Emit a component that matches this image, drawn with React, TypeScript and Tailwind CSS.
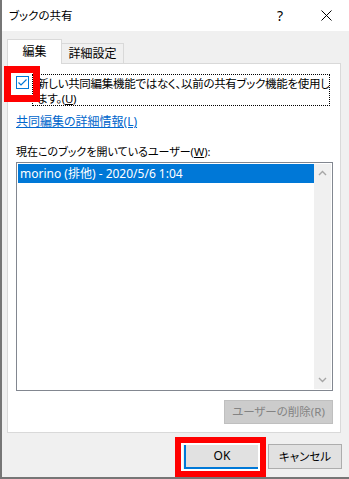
import React from "react";

const font = "font-['Noto_Sans','Noto_Sans_CJK_JP',sans-serif] [font-feature-settings:'palt']";

function CheckBox() {
  return (
    <svg width="13" height="13" viewBox="0 0 13 13" className="shrink-0">
      <rect x="0.5" y="0.5" width="12" height="12" fill="#fff" stroke="#0078d7" />
      <path d="M2.5 6.5 L5 9 L10.5 3.5" fill="none" stroke="#0078d7" strokeWidth="1.2" />
    </svg>
  );
}

function Chevron({ up }: { up?: boolean }) {
  return (
    <svg width="9" height="6" viewBox="0 0 9 6">
      <path
        d={up ? "M1 5 L4.5 1.5 L8 5" : "M1 1 L4.5 4.5 L8 1"}
        fill="none"
        stroke="#a6a6a6"
        strokeWidth="1.4"
      />
    </svg>
  );
}

export default function App() {
  return (
    <div
      className={`relative w-[349px] h-[479px] bg-[#f0f0f0] flex flex-col overflow-hidden border-l-2 border-b-2 border-[#767676] text-[11px] text-black whitespace-nowrap ${font}`}
    >
      {/* title bar */}
      <div className="h-[31px] bg-white flex items-center shrink-0">
        <span className="pl-[7px] text-[11.5px]">ブックの共有</span>
        <div className="ml-auto flex h-full">
          <div className="w-[46px] h-full flex items-center justify-center text-[14px]">?</div>
          <div className="w-[46px] h-full flex items-center justify-center">
            <svg width="11" height="11" viewBox="0 0 11 11">
              <path d="M0.5 0.5 L10.5 10.5 M10.5 0.5 L0.5 10.5" stroke="#000" strokeWidth="1" />
            </svg>
          </div>
        </div>
      </div>

      <div className="flex flex-col pl-[5px] pt-[8px]">
        {/* tabs */}
        <div className="flex items-end h-[25px]">
          <div className="relative z-10 w-[55px] h-[25px] bg-white border border-b-0 border-[#d9d9d9] flex items-center justify-center text-[12px]">
            編集
          </div>
          <div className="w-[62px] h-[22px] -mb-px border border-l-0 border-[#d9d9d9] bg-[#f0f0f0] flex items-center justify-center text-[12px]">
            詳細設定
          </div>
        </div>

        {/* panel */}
        <div className="w-[334px] h-[370px] -mt-px bg-white border border-[#d9d9d9] pl-[8px] flex flex-col">
          <div className="flex mt-[10px]">
            <div className="mt-[2px]">
              <CheckBox />
            </div>
            <div className="ml-[3px] w-[298px] h-[32px] border border-dotted border-black pl-[4px] pt-px leading-[15px] overflow-hidden text-[11.5px] tracking-[-0.3px]">
              新しい共同編集機能ではなく、以前の共有ブック機能を使用し
              <br />
              ます。(<span className="underline">U</span>)
            </div>
          </div>

          <div className="mt-[8px] leading-[15px] text-[#0066cc] underline text-[12px]">共同編集の詳細情報(L)</div>

          <div className="mt-[15px] leading-[15px]">
            現在このブックを開いているユーザー(<span className="underline">W</span>):
          </div>

          <div className="mt-[3px] w-[317px] h-[229px] border border-[#828790] flex p-px">
            <div className="flex-1">
              <div className="h-[19px] bg-[#0078d7] text-white pl-[2px] flex items-center text-[12px]">
                morino (排他) - 2020/5/6 1:04
              </div>
            </div>
            <div className="w-[17px] bg-[#f0f0f0] flex flex-col items-center justify-between py-[6px]">
              <Chevron up />
              <Chevron />
            </div>
          </div>

          <div className="w-[317px] flex justify-end mt-[9px]">
            <div className="w-[109px] h-[24px] bg-[#cccccc] border border-[#bfbfbf] text-[#838383] flex items-center justify-center text-[11.5px]">
              ユーザーの削除(R)
            </div>
          </div>
        </div>

        {/* buttons */}
        <div className="flex justify-end gap-[8px] mt-[10px] pr-[7px]">
          <div className="w-[76px] h-[26px] bg-[#e1e1e1] border-2 border-[#0078d7] flex items-center justify-center text-[12px]">
            OK
          </div>
          <div className="mt-px w-[74px] h-[25px] bg-[#e1e1e1] border border-[#adadad] flex items-center justify-center text-[11.5px]">
            キャンセル
          </div>
        </div>
      </div>

      {/* red highlight marks */}
      <div className="absolute left-[2px] top-[66px] w-[36px] h-[36px] border-[7px] border-[#ff0000]" />
      <div className="absolute left-[173px] top-[437px] w-[91px] h-[40px] border-[6px] border-[#ff0000]">
        <div className="w-full h-full border-2 border-white" />
      </div>
    </div>
  );
}
